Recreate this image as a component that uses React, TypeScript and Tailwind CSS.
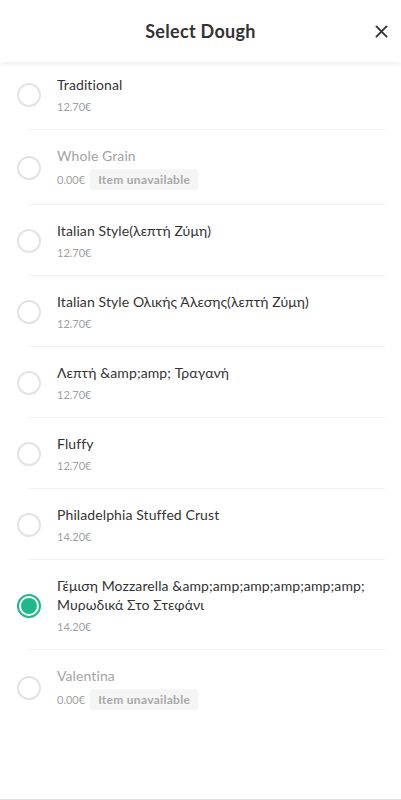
import { clsx } from 'clsx';

type Option = {
  name: string;
  price: string;
  unavailable?: boolean;
  selected?: boolean;
};

const OPTIONS: Option[] = [
  { name: 'Traditional', price: '12.70€' },
  { name: 'Whole Grain', price: '0.00€', unavailable: true },
  { name: 'Italian Style(λεπτή Ζύμη)', price: '12.70€' },
  { name: 'Italian Style Ολικής Άλεσης(λεπτή Ζύμη)', price: '12.70€' },
  { name: 'Λεπτή &amp;amp; Τραγανή', price: '12.70€' },
  { name: 'Fluffy', price: '12.70€' },
  { name: 'Philadelphia Stuffed Crust', price: '14.20€' },
  {
    name: 'Γέμιση Mozzarella &amp;amp;amp;amp;amp;amp; Μυρωδικά Στο Στεφάνι',
    price: '14.20€',
    selected: true,
  },
  { name: 'Valentina', price: '0.00€', unavailable: true },
];

function Radio({ checked }: { checked?: boolean }) {
  if (checked) {
    return (
      <div className="w-6 h-6 rounded-full border-2 border-[#1fb889] p-[2px] flex-shrink-0">
        <div className="w-full h-full rounded-full bg-[#1fb889]" />
      </div>
    );
  }
  return <div className="w-6 h-6 rounded-full border-2 border-[#e3e3e3] flex-shrink-0" />;
}

export default function App() {
  return (
    <div
      className="w-[401px] h-[800px] bg-white flex flex-col overflow-hidden border-b border-[#e2e2e2]"
      style={{ fontFamily: 'Lato, "Noto Sans", sans-serif' }}
    >
      {/* ── Header ── */}
      <header className="relative h-[62px] flex-shrink-0 flex items-center justify-center bg-white shadow-[0_2px_6px_rgba(0,0,0,0.07)] z-10">
        <h1 className="text-[18px] font-bold text-[#333] tracking-[0.3px]">Select Dough</h1>
        <button className="absolute right-[13px] top-[24px] w-[14px] h-[14px] flex items-center justify-center">
          <svg viewBox="0 0 14 14" className="w-[13px] h-[13px]" fill="none" stroke="#333" strokeWidth="2" strokeLinecap="round">
            <path d="M1.5 1.5l11 11M12.5 1.5l-11 11" />
          </svg>
        </button>
      </header>

      {/* ── Options ── */}
      <div className="flex flex-col">
        {OPTIONS.map((opt, idx) => {
          const isLast = idx === OPTIONS.length - 1;
          return (
            <div key={opt.name}>
              <div className={clsx('flex items-center pl-[17px] pr-[16px]', idx === 0 ? 'pt-[13px] pb-[14px]' : 'pt-[16px] pb-[14px]')}>
                <Radio checked={opt.selected} />
                <div className="ml-[16px] flex flex-col">
                  <span
                    className={clsx(
                      'text-[14px] leading-[19px] tracking-[0.1px]',
                      opt.unavailable ? 'text-[#a3a3a3]' : 'text-[#333]',
                    )}
                  >
                    {opt.name}
                  </span>
                  <div className="mt-[4px] flex items-center gap-[5px]">
                    <span className="text-[11px] leading-[17px] text-[#a0a0a0]">{opt.price}</span>
                    {opt.unavailable && (
                      <span className="h-[21px] px-[8px] flex items-center rounded-[3px] bg-[#f5f5f5] text-[12px] font-bold tracking-[0.3px] text-[#a8a8a8]">
                        Item unavailable
                      </span>
                    )}
                  </div>
                </div>
              </div>
              {!isLast && <div className="ml-[28px] mr-[16px] h-px bg-[#f1f1f1]" />}
            </div>
          );
        })}
      </div>
    </div>
  );
}
